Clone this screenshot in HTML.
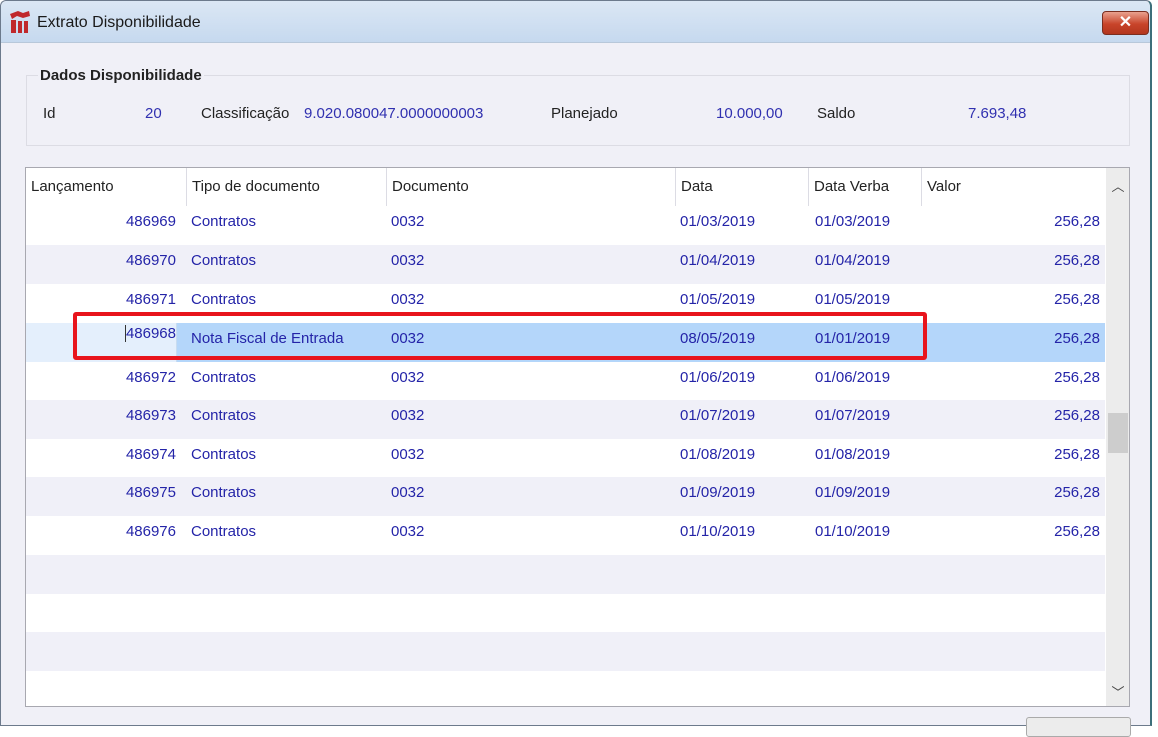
<!DOCTYPE html>
<html><head><style>
*{margin:0;padding:0;box-sizing:border-box}
body{width:1158px;height:725px;overflow:hidden;background:#fff;font-family:"Liberation Sans",sans-serif;font-size:15px;position:relative}
.win{position:absolute;left:0;top:0;width:1152px;height:726px;background:#f0f0f7;border:1px solid #6c7a8c;border-radius:6px 6px 0 0;border-right:2px solid #3c6f7a}
.title{position:absolute;left:0;top:0;right:0;height:42px;background:linear-gradient(#dbe7f4,#c6d9ef);border-bottom:1px solid #b8c8da;border-radius:6px 6px 0 0}
.title span{position:absolute;left:36px;top:13px;font-size:16px;color:#1a1a1a}
.close{position:absolute;left:1101px;top:10px;width:47px;height:24px;border-radius:4px;background:linear-gradient(#e9a18f,#c8442a 55%,#b3361e);border:1px solid #7a2e20;color:#fff;text-align:center;font-weight:bold;font-size:16px;line-height:22px}
.grp{position:absolute;left:25px;top:74px;width:1104px;height:71px;border:1px solid #dcdce4}
.lbl{position:absolute;font-size:15px;color:#222}
.v{position:absolute;color:#3030b0}
.grid{position:absolute;left:24px;top:166px;width:1105px;height:540px;background:#fff;border:1px solid #a8a8b0;overflow:hidden}
.hdr{position:absolute;left:0;top:0;width:1080px;height:38px;background:#fff}
.hdr div{position:absolute;color:#222;padding-left:5px;border-left:1px solid #dcdce4;height:38px;top:0;line-height:38px}
.row{position:absolute;left:0;width:1079px;height:39px}
.row.s{background:#f0f0f8}
.c{position:absolute;top:7px;color:#2424a8;white-space:nowrap}
.sb{position:absolute;left:1080px;top:0;width:24px;height:540px;background:#ececec}
</style></head><body>
<div class="win">
<div class="title">
<svg style="position:absolute;left:8px;top:9px" width="22" height="24" viewBox="0 0 22 24"><path d="M1 4 L9 1 L14 3 L20 1 L21 6 L14 8 L8 6 L3 9 Z" fill="#c0282c"/><rect x="2" y="10" width="5" height="13" fill="#c0282c"/><rect x="9" y="11" width="4" height="12" fill="#c0282c"/><rect x="15" y="11" width="4" height="12" fill="#c0282c"/></svg>
<span>Extrato Disponibilidade</span>
<div class="close">✕</div>
</div>
<div class="grp"></div>
<div class="lbl" style="left:37px;top:66px;font-weight:bold;background:#f0f0f7;padding:0 2px">Dados Disponibilidade</div>
<div class="lbl" style="left:42px;top:104px">Id</div>
<div class="v" style="left:144px;top:104px">20</div>
<div class="lbl" style="left:200px;top:104px">Classificação</div>
<div class="v" style="left:303px;top:104px">9.020.080047.0000000003</div>
<div class="lbl" style="left:550px;top:104px">Planejado</div>
<div class="v" style="left:715px;top:104px">10.000,00</div>
<div class="lbl" style="left:816px;top:104px">Saldo</div>
<div class="v" style="left:967px;top:104px">7.693,48</div>
<div class="grid">
<div class="hdr">
<div style="left:0;border:none">Lançamento</div>
<div style="left:160px">Tipo de documento</div>
<div style="left:360px">Documento</div>
<div style="left:649px">Data</div>
<div style="left:782px">Data Verba</div>
<div style="left:895px">Valor</div>
</div>
<div class="row" style="top:38px"><span class="c" style="right:929px">486969</span><span class="c" style="left:165px">Contratos</span><span class="c" style="left:365px">0032</span><span class="c" style="left:654px">01/03/2019</span><span class="c" style="left:789px">01/03/2019</span><span class="c" style="right:5px">256,28</span></div>
<div class="row s" style="top:77px"><span class="c" style="right:929px">486970</span><span class="c" style="left:165px">Contratos</span><span class="c" style="left:365px">0032</span><span class="c" style="left:654px">01/04/2019</span><span class="c" style="left:789px">01/04/2019</span><span class="c" style="right:5px">256,28</span></div>
<div class="row" style="top:116px"><span class="c" style="right:929px">486971</span><span class="c" style="left:165px">Contratos</span><span class="c" style="left:365px">0032</span><span class="c" style="left:654px">01/05/2019</span><span class="c" style="left:789px">01/05/2019</span><span class="c" style="right:5px">256,28</span></div>
<div class="row" style="top:155px;background:#b4d6fa"><div style="position:absolute;left:0;top:0;width:151px;height:39px;background:#e4effc;border-right:1px solid #c8dcf0"></div><span class="c" style="right:929px;top:2px;border-left:1px solid #333">486968</span><span class="c" style="left:165px">Nota Fiscal de Entrada</span><span class="c" style="left:365px">0032</span><span class="c" style="left:654px">08/05/2019</span><span class="c" style="left:789px">01/01/2019</span><span class="c" style="right:5px">256,28</span></div>
<div class="row" style="top:194px"><span class="c" style="right:929px">486972</span><span class="c" style="left:165px">Contratos</span><span class="c" style="left:365px">0032</span><span class="c" style="left:654px">01/06/2019</span><span class="c" style="left:789px">01/06/2019</span><span class="c" style="right:5px">256,28</span></div>
<div class="row s" style="top:232px"><span class="c" style="right:929px">486973</span><span class="c" style="left:165px">Contratos</span><span class="c" style="left:365px">0032</span><span class="c" style="left:654px">01/07/2019</span><span class="c" style="left:789px">01/07/2019</span><span class="c" style="right:5px">256,28</span></div>
<div class="row" style="top:271px"><span class="c" style="right:929px">486974</span><span class="c" style="left:165px">Contratos</span><span class="c" style="left:365px">0032</span><span class="c" style="left:654px">01/08/2019</span><span class="c" style="left:789px">01/08/2019</span><span class="c" style="right:5px">256,28</span></div>
<div class="row s" style="top:309px"><span class="c" style="right:929px">486975</span><span class="c" style="left:165px">Contratos</span><span class="c" style="left:365px">0032</span><span class="c" style="left:654px">01/09/2019</span><span class="c" style="left:789px">01/09/2019</span><span class="c" style="right:5px">256,28</span></div>
<div class="row" style="top:348px"><span class="c" style="right:929px">486976</span><span class="c" style="left:165px">Contratos</span><span class="c" style="left:365px">0032</span><span class="c" style="left:654px">01/10/2019</span><span class="c" style="left:789px">01/10/2019</span><span class="c" style="right:5px">256,28</span></div>
<div class="row s" style="top:387px"></div>
<div class="row" style="top:425px"></div>
<div class="row s" style="top:464px"></div>
<div class="row" style="top:502px"></div>
<div class="sb">
<div style="position:absolute;left:0;top:8px;width:24px;text-align:center;font-size:13px;color:#444">︿</div>
<div style="position:absolute;left:2px;top:245px;width:20px;height:40px;background:#cdcdcd"></div>
<div style="position:absolute;left:0;top:514px;width:24px;text-align:center;font-size:13px;color:#444">﹀</div>
</div>
</div>
<div style="position:absolute;left:72px;top:311px;width:854px;height:48px;border:4px solid #e8141c;border-radius:3px"></div>
<div style="position:absolute;left:1025px;top:716px;width:105px;height:20px;border:1px solid #aaa;border-radius:3px;background:#ececec"></div>
</div>
</body></html>
